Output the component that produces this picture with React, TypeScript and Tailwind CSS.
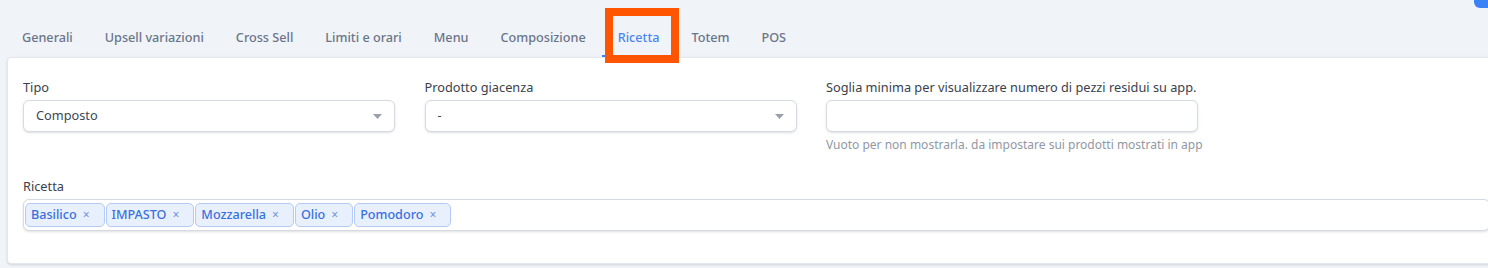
import React from "react";

const tabs = [
  "Generali",
  "Upsell variazioni",
  "Cross Sell",
  "Limiti e orari",
  "Menu",
  "Composizione",
  "Ricetta",
  "Totem",
  "POS",
];

const ingredients = ["Basilico", "IMPASTO", "Mozzarella", "Olio", "Pomodoro"];

function Caret() {
  return (
    <svg width="9" height="5" viewBox="0 0 9 5" className="text-[#9aa1ab]">
      <path d="M0 0h9L4.5 5z" fill="currentColor" />
    </svg>
  );
}

function SelectBox({ value }: { value: string }) {
  return (
    <div className="flex h-[32px] items-center justify-between rounded-md border border-[#d5dae3] bg-white pl-[12px] pr-[12px] text-[12.75px] text-[#3f4654] shadow-sm">
      <span>{value}</span>
      <Caret />
    </div>
  );
}

export default function App() {
  return (
    <div
      className="relative h-[268px] w-[1488px] overflow-hidden bg-[#f0f3f8]"
      style={{ fontFamily: '"Noto Sans", "Open Sans", sans-serif' }}
    >
      {/* top right button fragment */}
      <div className="absolute right-0 top-[-10px] h-[18px] w-[14px] rounded-bl-md bg-[#3b82f6]" />

      {/* tabs */}
      <div className="flex pl-[6px] pt-[19px]">
        {tabs.map((t) => (
          <div
            key={t}
            className={`flex h-[38px] items-center border-b-2 px-4 text-[12.65px] font-medium ${
              t === "Ricetta"
                ? "border-[#3b82f6] text-[#4a86ef]"
                : "border-transparent text-[#6b7588]"
            }`}
          >
            {t}
          </div>
        ))}
      </div>

      {/* card */}
      <div className="ml-[7px] w-[1500px] rounded-sm border border-[#e3e7ee] bg-white pb-[32px] pl-[15px] pr-4 pt-[20px] shadow-sm">
        <div className="flex gap-[29.5px]">
          <div className="w-[372px]">
            <div className="mb-[4px] text-[12.75px] leading-[18px] text-[#3a414d]">Tipo</div>
            <SelectBox value="Composto" />
          </div>
          <div className="w-[372px]">
            <div className="mb-[4px] text-[12.75px] leading-[18px] text-[#3a414d]">Prodotto giacenza</div>
            <SelectBox value="-" />
          </div>
          <div className="w-[372px]">
            <div className="mb-[4px] whitespace-nowrap text-[12.75px] leading-[18px] text-[#3a414d]">
              Soglia minima per visualizzare numero di pezzi residui su app.
            </div>
            <div className="h-[32px] rounded-md border border-[#d5dae3] bg-white shadow-sm" />
            <div className="mt-[4px] whitespace-nowrap text-[12px] leading-[18px] text-[#9198a4]">
              Vuoto per non mostrarla. da impostare sui prodotti mostrati in app
            </div>
          </div>
        </div>

        <div className="mt-[23px]">
          <div className="mb-[4px] text-[12.75px] leading-[18px] text-[#3a414d]">Ricetta</div>
          <div className="flex h-[32px] items-center gap-[1px] rounded-md border border-[#d5dae3] bg-white pl-[1px] shadow-sm">
            {ingredients.map((i) => (
              <div
                key={i}
                className="flex h-[24px] items-center rounded-[5px] border border-[#b3cbf5] bg-[#e9f0fd] pl-[5px] pr-[14px] text-[12.6px] font-medium text-[#3a71dc]"
              >
                <span>{i}</span>
                <span className="ml-[6px] text-[12px] font-normal text-[#6f95e0]">×</span>
              </div>
            ))}
          </div>
        </div>
      </div>

      {/* annotation highlight */}
      <div className="absolute left-[605px] top-[8px] h-[55px] w-[74px] border-[8px] border-[#ff5500]" />
    </div>
  );
}
